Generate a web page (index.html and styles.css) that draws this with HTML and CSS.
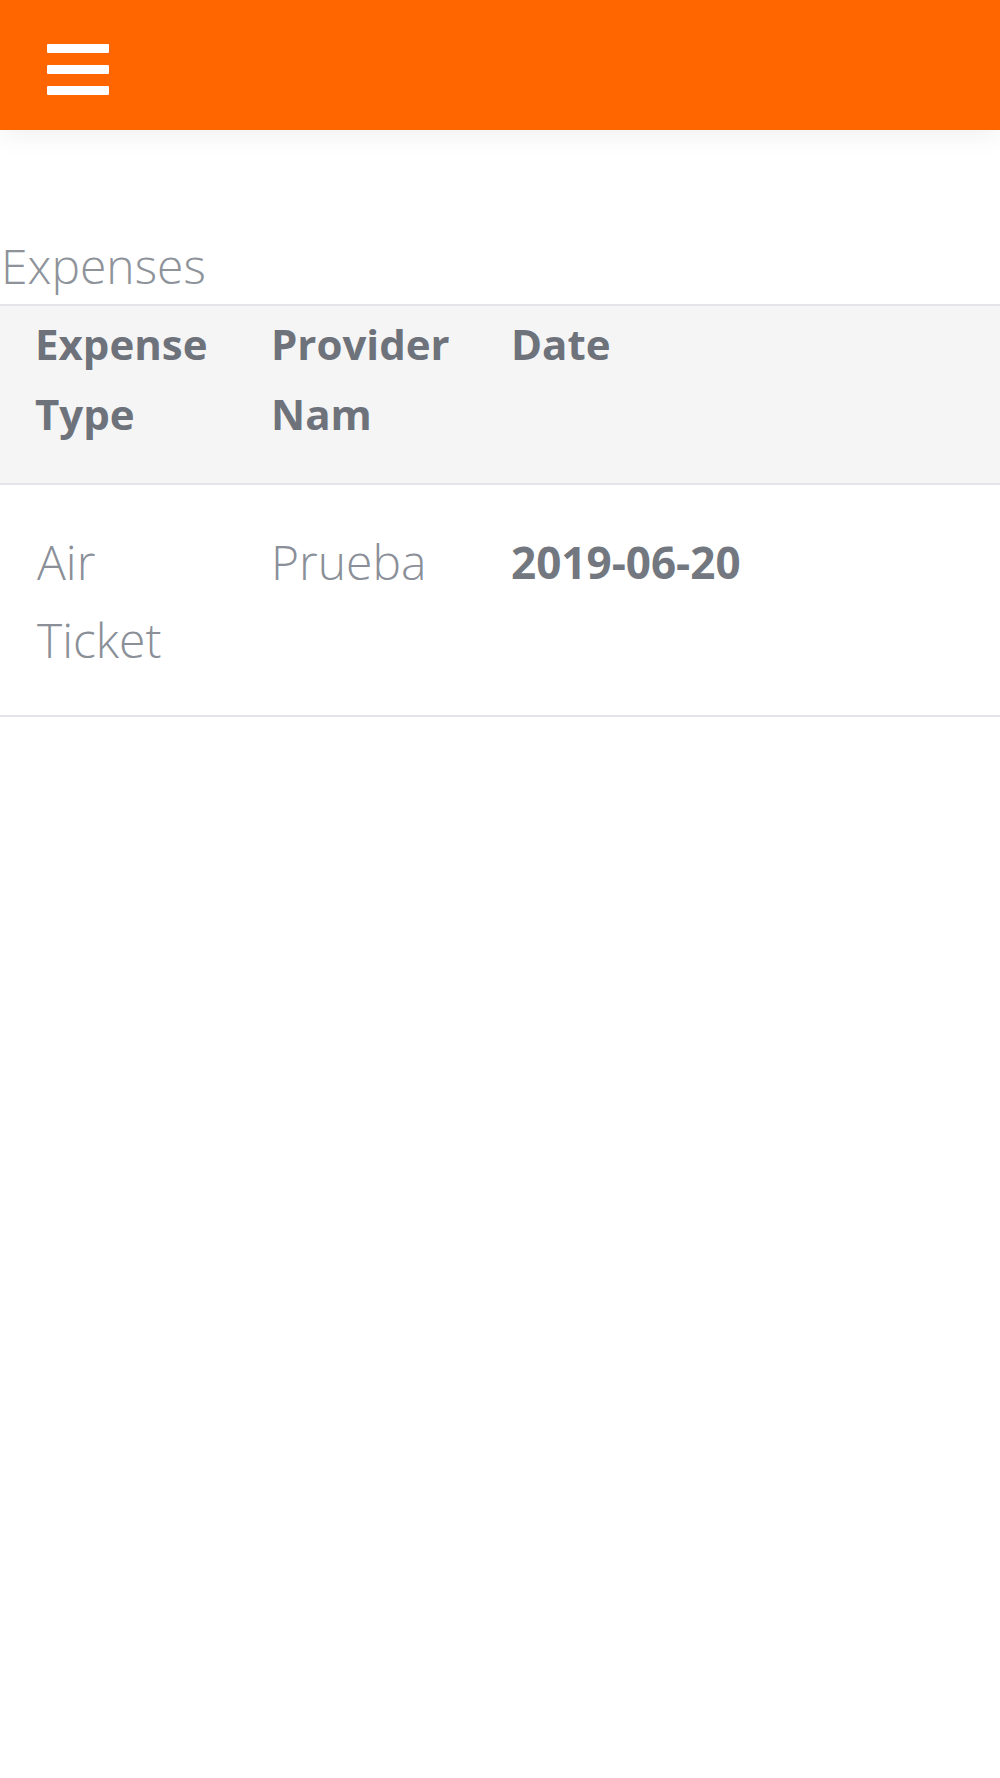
FILE: index.html
```html
<!DOCTYPE html>
<html>
<head>
    <title>Expenses</title>
    <link rel="stylesheet" href="styles.css">
</head>
<body>
    <div class="topbar">
        <button class="menu-btn" aria-label="Menu">
            <span></span>
            <span></span>
            <span></span>
        </button>
    </div>
    <div class="content">
        <div class="section-title">Expenses</div>
        <table class="expenses">
            <colgroup>
                <col class="col-type">
                <col class="col-provider">
                <col>
            </colgroup>
            <thead>
                <tr>
                    <th>Expense Type</th>
                    <th>Provider Nam</th>
                    <th>Date</th>
                </tr>
            </thead>
            <tbody>
                <tr>
                    <td class="type">Air Ticket</td>
                    <td class="provider">Prueba</td>
                    <td class="date">2019-06-20</td>
                </tr>
            </tbody>
        </table>
    </div>
</body>
</html>
```

FILE: styles.css
```css
body {
    margin: 0;
    font-family: "Open Sans", "Liberation Sans", sans-serif;
    background-color: white;
}
.topbar {
    height: 130px;
    background-color: #ff6600;
    box-shadow: 0 6px 24px rgba(0, 0, 0, 0.06);
    display: flex;
    align-items: flex-start;
    padding-left: 47px;
    padding-top: 44px;
    box-sizing: border-box;
}
.menu-btn {
    display: flex;
    flex-direction: column;
    gap: 12px;
    background: none;
    border: none;
    padding: 0;
    cursor: pointer;
}
.menu-btn span {
    display: block;
    width: 62px;
    height: 9px;
    background-color: white;
    border-radius: 1px;
}
.content {
    padding-top: 104px;
}
.section-title {
    font-size: 48px;
    font-weight: 300;
    color: #8e939a;
    line-height: 64px;
    padding-left: 1px;
    margin-bottom: 6px;
}
.expenses {
    width: 100%;
    border-collapse: collapse;
    table-layout: fixed;
}
.col-type {
    width: 236px;
}
.col-provider {
    width: 240px;
}
th, td {
    text-align: left;
    vertical-align: top;
    padding-left: 35px;
    padding-right: 30px;
}
th {
    background-color: #f5f5f5;
    border-top: 2px solid #e3e5e8;
    border-bottom: 2px solid #e3e5e8;
    font-size: 42px;
    font-weight: 700;
    line-height: 70px;
    color: #6d727b;
    padding-top: 3px;
    padding-bottom: 34px;
}
td {
    font-size: 48px;
    font-weight: 300;
    line-height: 78px;
    color: #8a8f98;
    padding-top: 38px;
    padding-bottom: 36px;
    border-bottom: 2px solid #e3e5e8;
}
td.type {
    padding-left: 37px;
}
td.date {
    font-size: 44px;
    font-weight: 700;
    color: #737880;
}
```
